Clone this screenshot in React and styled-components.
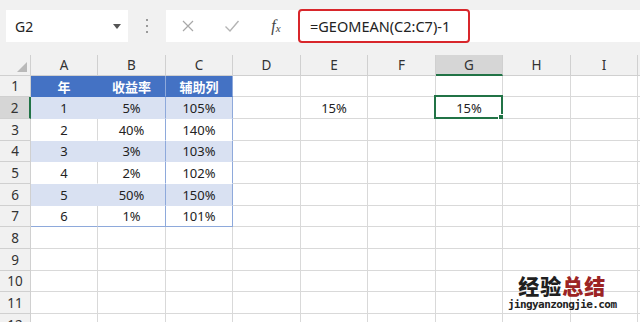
import React from "react";
import styled, { createGlobalStyle } from "styled-components";

const GlobalStyle = createGlobalStyle`
    html, body {
        margin: 0;
        padding: 0;
        background: #ffffff;
    }
    body {
        font-family: "Noto Sans", "Noto Sans CJK SC", sans-serif;
        overflow: hidden;
    }
`;

const COLS = ["A", "B", "C", "D", "E", "F", "G", "H", "I", ""];
const COL_WIDTHS = [67, 68, 67, 68, 67, 68, 67, 68, 67, 20];
const ROW_HEIGHTS = [21, 22, 22, 21, 22, 22, 21, 22, 22, 21, 22, 22];

const table = [
    ["年", "收益率", "辅助列"],
    ["1", "5%", "105%"],
    ["2", "40%", "140%"],
    ["3", "3%", "103%"],
    ["4", "2%", "102%"],
    ["5", "50%", "150%"],
    ["6", "1%", "101%"],
];

const GRID = "#d9d9d9";
const GREEN = "#217346";

export default function App() {
    const cells = [];

    cells.push(
        <Corner key="corner">
            <CornerMark />
        </Corner>
    );
    COLS.forEach((c, i) => {
        cells.push(
            <ColHead key={"h" + i} selected={c === "G"}>
                {c}
            </ColHead>
        );
    });

    ROW_HEIGHTS.forEach((h, r) => {
        const row = r + 1;
        cells.push(
            <RowHead key={"r" + row} selected={row === 2}>
                {row}
            </RowHead>
        );
        COLS.forEach((c, ci) => {
            let text = "";
            let tone = "plain";
            if (row <= 7 && ci < 3) {
                text = table[r][ci];
                if (row === 1) tone = "head";
                else tone = row % 2 === 0 ? "band" : "light";
            }
            if (row === 2 && c === "E") text = "15%";
            if (row === 2 && c === "G") text = "15%";
            cells.push(
                <Cell
                    key={row + c}
                    tone={tone}
                    inTable={row <= 7 && ci < 3}
                    colIndex={ci}
                    lastRow={row === 7}
                >
                    {text}
                    {row === 2 && c === "G" && (
                        <Selection>
                            <Handle />
                        </Selection>
                    )}
                </Cell>
            );
        });
    });

    return (
        <>
            <GlobalStyle />
            <Page>
                <TopBar>
                    <NameBox>
                        G2
                        <Caret />
                    </NameBox>
                    <Dots>
                        <span />
                        <span />
                        <span />
                    </Dots>
                    <FormulaBox>
                        <ToolSlot>
                            <svg width="14" height="14" viewBox="0 0 14 14">
                                <path d="M2 2 L12 12 M12 2 L2 12" stroke="#a8a8a8" strokeWidth="1.2" fill="none" />
                            </svg>
                        </ToolSlot>
                        <ToolSlot>
                            <svg width="16" height="14" viewBox="0 0 16 14">
                                <path d="M1.5 7.5 L6 12 L14.5 2" stroke="#b4b4b4" strokeWidth="1.4" fill="none" />
                            </svg>
                        </ToolSlot>
                        <ToolSlot>
                            <Fx>
                                f<sub>x</sub>
                            </Fx>
                        </ToolSlot>
                        <FormulaText>=GEOMEAN(C2:C7)-1</FormulaText>
                    </FormulaBox>
                </TopBar>
                <Sheet>{cells}</Sheet>
                <Watermark>
                    <WmTitle>
                        经验<em>总结</em>
                    </WmTitle>
                    <WmUrl>jingyanzongjie.com</WmUrl>
                </Watermark>
            </Page>
        </>
    );
}

const Page = styled.div`
    position: relative;
    width: 640px;
    height: 322px;
    overflow: hidden;
    background: #ffffff;
`;

const TopBar = styled.div`
    display: flex;
    align-items: center;
    height: 55px;
    box-sizing: border-box;
    padding: 0 0 3px 6px;
    background: #f1f1f1;
`;

const NameBox = styled.div`
    position: relative;
    display: flex;
    align-items: center;
    width: 122px;
    height: 32px;
    box-sizing: border-box;
    padding-left: 9px;
    background: #ffffff;
    font-size: 14px;
    color: #222;
`;

const Caret = styled.span`
    position: absolute;
    right: 7px;
    top: 14px;
    width: 0;
    height: 0;
    border-left: 4.5px solid transparent;
    border-right: 4.5px solid transparent;
    border-top: 5px solid #555;
`;

const Dots = styled.div`
    display: flex;
    flex-direction: column;
    gap: 4px;
    width: 38px;
    align-items: center;

    span {
        width: 1.5px;
        height: 2px;
        background: #9a9a9a;
    }
`;

const FormulaBox = styled.div`
    flex: 1;
    display: flex;
    align-items: center;
    height: 32px;
    background: #ffffff;
`;

const ToolSlot = styled.div`
    width: 44px;
    display: flex;
    justify-content: center;
    align-items: center;
`;

const Fx = styled.span`
    font-family: "Liberation Serif", serif;
    font-style: italic;
    font-size: 16px;
    color: #444;

    sub {
        font-size: 11px;
        vertical-align: -1px;
    }
`;

const FormulaText = styled.div`
    display: flex;
    align-items: center;
    width: 172px;
    height: 34px;
    box-sizing: border-box;
    padding-left: 10px;
    border: 2.5px solid #d8262b;
    border-radius: 4px;
    font-size: 14.5px;
    color: #222;
    white-space: nowrap;
`;

const Sheet = styled.div`
    display: grid;
    grid-template-columns: 31px ${COL_WIDTHS.map((w) => w + "px").join(" ")};
    grid-template-rows: 21px ${ROW_HEIGHTS.map((h) => h + "px").join(" ")};
`;

const Corner = styled.div`
    position: relative;
    background: #f1f1f1;
    border-right: 1px solid #d0d0d0;
    border-bottom: 1px solid #d0d0d0;
`;

const CornerMark = styled.span`
    position: absolute;
    right: 3px;
    bottom: 3px;
    width: 0;
    height: 0;
    border-left: 10px solid transparent;
    border-bottom: 10px solid #b9b9b9;
`;

const ColHead = styled.div`
    display: flex;
    align-items: center;
    justify-content: center;
    background: ${(p) => (p.selected ? "#d6d6d6" : "#f1f1f1")};
    border-right: 1px solid #d0d0d0;
    border-bottom: ${(p) => (p.selected ? `2px solid ${GREEN}` : "1px solid #d0d0d0")};
    font-size: 13.5px;
    color: #333;
`;

const RowHead = styled.div`
    display: flex;
    align-items: center;
    justify-content: center;
    background: ${(p) => (p.selected ? "#d6d6d6" : "#f1f1f1")};
    border-right: ${(p) => (p.selected ? `2px solid ${GREEN}` : "1px solid #d0d0d0")};
    border-bottom: 1px solid #d0d0d0;
    font-size: 13.5px;
    color: #333;
`;

const toneBg = {
    head: "#4472c4",
    band: "#d9e1f2",
    light: "#ffffff",
    plain: "#ffffff",
};

const Cell = styled.div`
    position: relative;
    display: flex;
    align-items: center;
    justify-content: center;
    background: ${(p) => toneBg[p.tone]};
    color: ${(p) => (p.tone === "head" ? "#ffffff" : "#222")};
    font-weight: ${(p) => (p.tone === "head" ? 700 : 400)};
    font-size: 13px;
    border-right: 1px solid
        ${(p) => {
            if (!p.inTable) return GRID;
            if (p.colIndex >= 1) return "#8ea9db";
            return p.tone === "light" ? GRID : toneBg[p.tone];
        }};
    border-bottom: 1px solid
        ${(p) => {
            if (!p.inTable) return GRID;
            if (p.lastRow) return "#8ea9db";
            return "transparent";
        }};
`;

const Selection = styled.div`
    position: absolute;
    left: -2px;
    top: -2px;
    right: -1px;
    bottom: -1px;
    border: 2px solid ${GREEN};
    pointer-events: none;
`;

const Handle = styled.span`
    position: absolute;
    right: -4px;
    bottom: -4px;
    width: 5px;
    height: 5px;
    background: ${GREEN};
    border: 1px solid #ffffff;
`;

const Watermark = styled.div`
    position: absolute;
    left: 508px;
    top: 273px;
    display: flex;
    flex-direction: column;
    align-items: center;
`;

const WmTitle = styled.div`
    font-family: "Noto Sans CJK SC", sans-serif;
    font-weight: 900;
    font-size: 21px;
    line-height: 24px;
    letter-spacing: 1px;
    color: #1f1f1f;

    em {
        font-style: normal;
        color: #9c2424;
    }
`;

const WmUrl = styled.div`
    margin-top: 1px;
    font-family: "DejaVu Sans Mono", monospace;
    font-weight: 700;
    font-size: 11px;
    line-height: 13px;
    letter-spacing: -0.6px;
    color: #222;
`;
